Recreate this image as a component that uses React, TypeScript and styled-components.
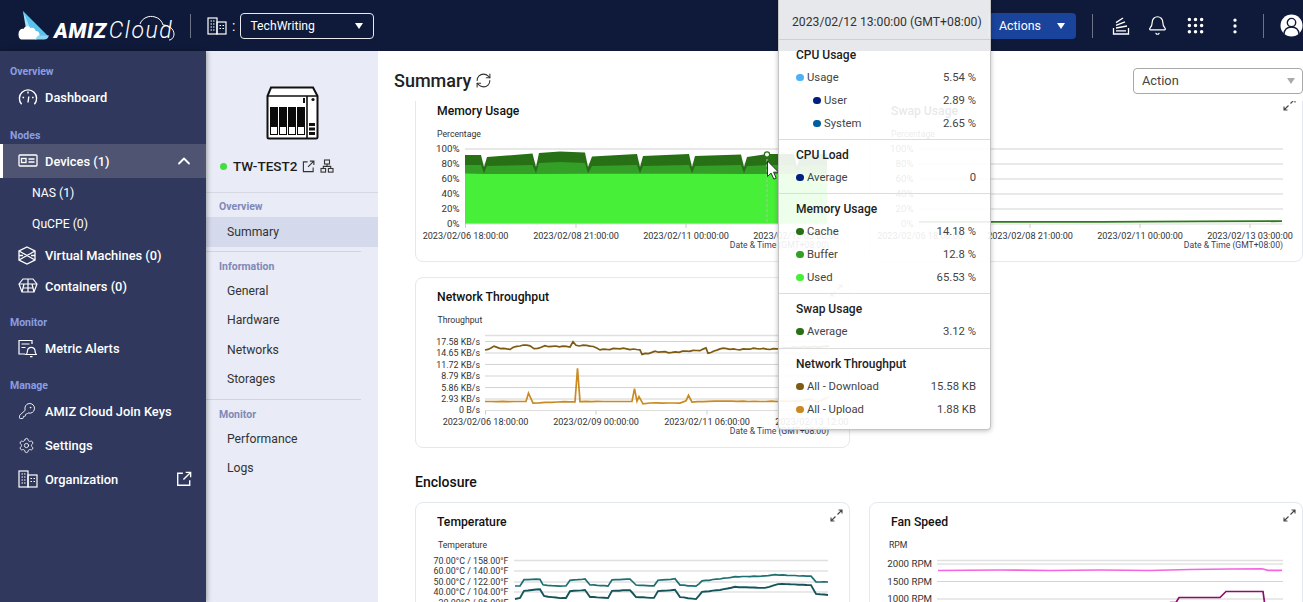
import { ReactNode } from 'react';
import styled, { createGlobalStyle } from 'styled-components';
import { Bell, ChevronUp, EllipsisVertical, Grip, KeyRound, RefreshCw, Settings } from 'lucide-react';

const GlobalStyle = createGlobalStyle`
  html, body { margin: 0; padding: 0; height: 100%; overflow: hidden; }
  body { font-family: Roboto, "Liberation Sans", sans-serif; color: #222; background: #fff; }
  * { box-sizing: border-box; }
  svg text { font-family: Roboto, "Liberation Sans", sans-serif; }
`;

// Icons
const OpenIcon = ({ size = 13, color = '#333' }: { size?: number; color?: string }) => (
  <svg width={size} height={size} viewBox="0 0 14 14" fill="none" stroke={color} strokeWidth="1.2">
    <path d="M6 2H1.5v10.5H12V8" />
    <path d="M6.5 7.5 12.5 1.5M8.5 1.2h4.3v4.3" />
  </svg>
);

const TopologyIcon = () => (
  <svg width="14" height="14" viewBox="0 0 14 14" fill="none" stroke="#333" strokeWidth="1.1">
    <rect x="4.5" y="1" width="5" height="4" />
    <rect x="1" y="9.5" width="4.6" height="3.6" />
    <rect x="8.4" y="9.5" width="4.6" height="3.6" />
    <path d="M7 5v2.4M3.3 9.5V7.4h7.4v2.1" />
  </svg>
);

const BuildingIcon = ({ size = 20 }: { size?: number }) => (
  <svg width={size} height={size} viewBox="0 0 20 20" fill="none" stroke="#fff" strokeWidth="1.2">
    <rect x="1" y="2" width="9" height="16" />
    <rect x="10" y="6" width="9" height="12" />
    <path d="M3.5 5h1.5M6 5h1.5M3.5 8h1.5M6 8h1.5M3.5 11h1.5M6 11h1.5M3.5 14h1.5M6 14h1.5M12.5 9.5h1.5M15.5 9.5h1.5M12.5 12.5h1.5M15.5 12.5h1.5" />
  </svg>
);

const GaugeIcon = () => (
  <svg width="20" height="18" viewBox="0 0 20 18" fill="none" stroke="#fff" strokeWidth="1.4">
    <path d="M3.6 16.2a8.6 8.6 0 1 1 12.8 0" />
    <path d="M10 3.5v2M4.5 9.5h1.6M14 9.5h1.6M10 14.5l.8-6" />
  </svg>
);

const DeviceIcon = () => (
  <svg width="20" height="14" viewBox="0 0 20 14" fill="none" stroke="#fff" strokeWidth="1.3">
    <rect x="1" y="1" width="18" height="11" rx="1" />
    <rect x="3.5" y="4.5" width="4.5" height="4" />
    <path d="M10.5 5h6M10.5 8h6" />
  </svg>
);

const VmIcon = () => (
  <svg width="18" height="19" viewBox="0 0 18 19" fill="none" stroke="#fff" strokeWidth="1.3">
    <path d="M9 1 17 5v9l-8 4-8-4V5z" />
    <path d="M1 5l16 9M17 5 1 14M1 9.5h4M13 9.5h4" />
  </svg>
);

const ContainerIcon = () => (
  <svg width="20" height="17" viewBox="0 0 20 17" fill="none" stroke="#fff" strokeWidth="1.2">
    <path d="M5 1h10l4 5-3 8H4L1 6z" />
    <path d="M1 6h18M6 6l-2 8M14 6l2 8M10 1v13M5 10h10" />
  </svg>
);

const AlertIcon = () => (
  <svg width="19" height="19" viewBox="0 0 19 19" fill="none" stroke="#fff" strokeWidth="1.2">
    <path d="M14 5V1.5H1V15h6" />
    <path d="M3.5 5h8M3.5 8.5h4" />
    <path d="M8 15.5c1.5-1 1.5-2.5 1.5-4a3.8 3.8 0 0 1 7.5 0c0 1.5 0 3 1.5 4zM12 17.6h2.5" />
  </svg>
);

const TasksIcon = () => (
  <svg width="18" height="18" viewBox="0 0 18 18" fill="none" stroke="#fff" strokeWidth="1.3">
    <path d="M1.5 11v6h15v-6M4 13.8h10M4 11l11-2M4 8.4l9-3.6M4 5.6l7-4.6" />
  </svg>
);

const Avatar = () => (
  <svg width="23" height="23" viewBox="0 0 23 23">
    <circle cx="11.5" cy="11.5" r="11" fill="#fff" />
    <circle cx="11.5" cy="8.6" r="4.2" fill="none" stroke="#0f1a3a" strokeWidth="1.4" />
    <path d="M4 20c.5-5 4-7 7.5-7s7 2 7.5 7" fill="none" stroke="#0f1a3a" strokeWidth="1.4" />
  </svg>
);

const ExpandIcon = ({ color = '#444' }: { color?: string }) => (
  <svg width="13" height="13" viewBox="0 0 13 13" fill="none" stroke={color} strokeWidth="1.1">
    <path d="M7.5 5.5 12 1M8.5 1H12v3.5M5.5 7.5 1 12M1 8.5V12h3.5" />
  </svg>
);

const NasIcon = () => (
  <svg width="54" height="54" viewBox="0 0 54 54">
    <path d="M6 1.5h42l4.5 8.5v41a1.5 1.5 0 0 1-1.5 1.5H4a1.5 1.5 0 0 1-1.5-1.5V10z" fill="#fff" stroke="#111" strokeWidth="2" />
    <path d="M2.5 10h50M42 10v42.5" stroke="#111" strokeWidth="1.6" />
    {[5, 14, 23, 32].map((x) => (
      <g key={x}>
        <rect x={x} y="21" width="8" height="28" fill="#0a0a0a" />
        <rect x={x + 1} y="41" width="6" height="7" fill="#fff" />
      </g>
    ))}
    <rect x="38" y="12" width="2" height="5" fill="#111" />
    <circle cx="48" cy="13.5" r="1.6" fill="#111" />
    <rect x="44" y="37" width="6" height="3" fill="#111" />
    <rect x="44" y="41.5" width="6" height="3" fill="#111" />
    <rect x="44" y="46" width="6" height="3" fill="#111" />
  </svg>
);

const LogoMark = () => (
  <svg width="32" height="31" viewBox="0 0 32 31">
    <path d="M5 1 30 26H12z" fill="#58c3ee" />
    <path d="M5 1 15 25H9z" fill="#a5e4f8" />
    <path d="M0.5 24c0-4 3-6 5-5 1-3 5-4 7-1 3-1 5 1 5 3 3 0 4 2 4 4s-2 4.5-4 4.5H4.500c-3 0-4-2-4-5.500z" fill="#fff" />
    <path d="M17 29.500h9c2 0 4-1 5-4H20z" fill="#8fd6f3" />
  </svg>
);

const CloudOutline = () => (
  <CloudOverlay width="40" height="27" viewBox="0 0 40 27" fill="none" stroke="#fff" strokeWidth="1">
    <path d="M4 10c2-6 9-9 15-7 4 1 7 4 8 8 6 0 11 4 11 9 0 3-2 6-5 6" />
  </CloudOverlay>
);

// Chart helpers
type P = [number, number];
const line = (pts: P[]) => pts.map(([x, y]) => `${x},${y}`).join(' ');

// little repeatable wobble so the traces look like measured data
const wobble = (knots: P[], amp: number, step = 3.4): P[] => {
  const out: P[] = [];
  for (let i = 0; i < knots.length - 1; i++) {
    const [x0, y0] = knots[i];
    const [x1, y1] = knots[i + 1];
    const n = Math.max(1, Math.round((x1 - x0) / step));
    for (let j = 0; j < n; j++) {
      const x = x0 + ((x1 - x0) * j) / n;
      const noise = (Math.sin(x * 1.7) + Math.sin(x * 0.63 + 1)) * amp * 0.5;
      out.push([+x.toFixed(1), +(y0 + ((y1 - y0) * j) / n + noise).toFixed(1)]);
    }
  }
  out.push(knots[knots.length - 1]);
  return out;
};

// x, top of stack, top of buffer
const memory: [number, number, number][] = [
  [465, 154, 164], [481, 154, 164], [484, 166, 172.5], [487, 156, 165], [532.5, 152.5, 164],
  [536, 166, 172.5], [539, 152, 162], [560, 150.5, 161], [585, 151.5, 162], [588, 166, 172.5],
  [592, 155.5, 165], [637, 153, 164], [640, 166, 172.5], [643, 155, 165], [689, 153, 164],
  [692, 166, 172.5], [695, 155, 165], [741, 153.5, 164], [744, 166, 172.5], [747, 156, 165],
  [767, 153, 164], [794, 153, 164], [797, 166, 172.5], [800, 155, 165], [827, 153, 164],
];

const areaOf = (idx: 1 | 2) =>
  `465,223 ${memory.map((m) => `${m[0]},${m[idx]}`).join(' ')} 827,223`;

const download = wobble(
  [[485, 349], [494, 346], [510, 348], [520, 345], [530, 344], [534, 348], [545, 345], [570, 345], [573, 341], [576, 345], [590, 345], [600, 348], [640, 348], [642, 354], [655, 350], [672, 352], [700, 349], [706, 347], [708, 352], [720, 348], [760, 348], [790, 347], [829, 345]],
  1
);

const upload = wobble(
  [[485, 400.5], [526, 400.5], [528.5, 392], [533, 402], [570, 400.5], [575, 401], [577.5, 367], [580, 400.5], [632, 400.5], [634.5, 388], [637, 400], [639, 395.5], [643, 403], [650, 402], [680, 402], [686, 400], [688.5, 394], [692, 401], [720, 400], [760, 400.5], [800, 400], [810, 398], [818, 401], [829, 396]],
  0.3,
  6
);

const tempTop = wobble(
  [[515, 585], [520, 585], [524, 579], [540, 578], [543, 584], [560, 585], [566, 585], [570, 579], [585, 578], [590, 584], [608, 585], [612, 579], [630, 578], [636, 584], [654, 585], [658, 579], [675, 578], [680, 584], [696, 585], [702, 580], [720, 578], [735, 576], [765, 575], [775, 574], [811, 575], [816, 581], [828, 581]],
  0.35,
  4
);

const tempBottom = wobble(
  [[515, 598], [520, 597], [524, 590], [540, 588], [544, 595], [560, 597], [566, 597], [570, 590], [585, 589], [590, 596], [608, 597], [612, 590], [630, 589], [636, 596], [654, 597], [658, 590], [675, 589], [680, 596], [696, 598], [702, 591], [720, 589], [735, 586], [765, 587], [778, 583], [811, 584], [816, 593], [828, 594]],
  0.2,
  4
);

const gridColor = '#d4d4d4';

const YLabels = ({ x, rows, size = 9.7 }: { x: number; rows: [string, number][]; size?: number }) => (
  <>
    {rows.map(([t, y]) => (
      <text key={t} x={x} y={y + 3.4} fontSize={size} fill="#333" textAnchor="end">{t}</text>
    ))}
  </>
);

const GridLines = ({ from, to, ys }: { from: number; to: number; ys: number[] }) => (
  <>
    {ys.map((y, i) => (
      <line key={y} x1={from} x2={to} y1={y} y2={y} stroke={i === 0 ? '#e0e0e0' : gridColor} strokeWidth={i === 0 ? 1.7 : 1.2} />
    ))}
  </>
);

const XLabels = ({ axis, rows }: { axis: number; rows: [string, number][] }) => (
  <>
    <line x1={rows[0][1]} x2={rows[rows.length - 1][1] + 33} y1={axis} y2={axis} stroke="#ddd" />
    {rows.map(([t, x]) => (
      <g key={t}>
        <line x1={x} x2={x} y1={axis} y2={axis + 4} stroke="#ccc" />
        <text x={x} y={axis + 14.5} fontSize="9.1" fill="#333" textAnchor="middle">{t}</text>
      </g>
    ))}
  </>
);

const Unit = ({ x, y, children }: { x: number; y: number; children: ReactNode }) => (
  <text x={x} y={y} fontSize="8.7" fill="#333">{children}</text>
);

const AxisName = ({ x, y }: { x: number; y: number }) => (
  <text x={x} y={y} fontSize="8.6" fill="#3c3c5a" textAnchor="end">Date &amp; Time (GMT+08:00)</text>
);

const percentRows: [string, number][] = [
  ['100%', 148], ['80%', 163], ['60%', 178], ['40%', 193], ['20%', 208], ['0%', 223],
];

const MemoryChart = () => (
  <ChartSvg viewBox="416 120 433 140" height="140">
    <Unit x={437} y={136}>Percentage</Unit>
    <YLabels x={459.500} rows={percentRows} />
    <GridLines from={465} to={829} ys={[148, 163, 178, 193, 208]} />
    <polygon points={areaOf(1)} fill="#277016" />
    <polygon points={areaOf(2)} fill="#339f26" />
    <polygon points="465,223 465,172.5 484,173 536,173 588,172.7 640,172.7 692,172.7 744,173 797,173 827,173 827,223" fill="#48ef38" />
    <XLabels axis={223} rows={[['2023/02/06 18:00:00', 465.5], ['2023/02/08 21:00:00', 576], ['2023/02/11 00:00:00', 686], ['2023/02/13 03:00:00', 796]]} />
    <AxisName x={829} y={247} />
    <line x1={767} x2={767} y1={153} y2={223} stroke="#9ecf98" strokeDasharray="3 2" />
    <circle cx={767} cy={153.5} r={2.6} fill="#fff" stroke="#277016" strokeWidth="1.2" />
    <path d="M767.5 160v15.5l3.6-3.4 2.7 6 2.4-1-2.6-5.9h5z" fill="#fff" stroke="#222" strokeWidth="0.9" />
  </ChartSvg>
);

const SwapChart = () => (
  <ChartSvg viewBox="870 120 432 140" height="140">
    <Unit x={891} y={136}>Percentage</Unit>
    <YLabels x={913.500} rows={percentRows} />
    <GridLines from={919} to={1283} ys={[148, 163, 178, 193, 208]} />
    <polyline points="919,220.8 1100,220.8 1200,220.4 1282,220.2" fill="none" stroke="#2c7a1a" strokeWidth="1.8" />
    <XLabels axis={223} rows={[['2023/02/06 18:00:00', 920], ['2023/02/08 21:00:00', 1030], ['2023/02/11 00:00:00', 1140], ['2023/02/13 03:00:00', 1250]]} />
    <AxisName x={1283} y={247} />
  </ChartSvg>
);

const NetworkChart = () => (
  <ChartSvg viewBox="416 306 433 140" height="140">
    <Unit x={437.5} y={322}>Throughput</Unit>
    <YLabels x={480} size={8.9} rows={[['17.58 KB/s', 340.5], ['14.65 KB/s', 352], ['11.72 KB/s', 363.5], ['8.79 KB/s', 375], ['5.86 KB/s', 386.5], ['2.93 KB/s', 398], ['0 B/s', 409]]} />
    <GridLines from={485} to={829} ys={[334.5, 340.5, 352, 363.5, 375, 386.5, 398]} />
    <XLabels axis={409.5} rows={[['2023/02/06 18:00:00', 485.5], ['2023/02/09 00:00:00', 596], ['2023/02/11 06:00:00', 707], ['2023/02/13 12:00:00', 818]]} />
    <polyline points={line(download)} fill="none" stroke="#7f5a13" strokeWidth="1.7" />
    <polyline points={line(upload)} fill="none" stroke="#c98a22" strokeWidth="1.7" />
    <AxisName x={829} y={433} />
  </ChartSvg>
);

const TemperatureChart = () => (
  <ChartSvg viewBox="416 531 433 80" height="80">
    <Unit x={438} y={547}>Temperature</Unit>
    <YLabels x={508.5} size={8.9} rows={[['70.00°C / 158.00°F', 559.5], ['60.00°C / 140.00°F', 570], ['50.00°C / 122.00°F', 581], ['40.00°C / 104.00°F', 591], ['30.00°C / 86.00°F', 601.5]]} />
    <GridLines from={514} to={828} ys={[559.5, 570, 581, 591, 601.5]} />
    <polyline points={line(tempTop)} fill="none" stroke="#1d7070" strokeWidth="1.7" />
    <polyline points={line(tempBottom)} fill="none" stroke="#15555a" strokeWidth="1.9" />
  </ChartSvg>
);

const FanChart = () => (
  <ChartSvg viewBox="870 531 432 80" height="80">
    <Unit x={889} y={547}>RPM</Unit>
    <YLabels x={932} rows={[['2000 RPM', 563], ['1500 RPM', 580.5], ['1000 RPM', 598]]} />
    <GridLines from={937} to={1283} ys={[559.5, 563, 580.5, 598]} />
    <polyline points="938,569.5 1000,569 1050,569.5 1100,569 1150,569.5 1190,568.5 1230,568 1262,567.8 1268,569.3 1282,569.3" fill="none" stroke="#f564e3" strokeWidth="1.7" />
    <polyline points="1170,601.5 1176,601.5 1179,596.5 1220,596.5 1226,590.5 1263,590.5 1265,605" fill="none" stroke="#8b0f6a" strokeWidth="1.7" />
  </ChartSvg>
);

// Data
const tooltipGroups = [
  {
    title: 'CPU Usage',
    rows: [
      { label: 'Usage', value: '5.54 %', color: '#4db1f5' },
      { label: 'User', value: '2.89 %', color: '#001f80', sub: true },
      { label: 'System', value: '2.65 %', color: '#00609f', sub: true },
    ],
  },
  { title: 'CPU Load', rows: [{ label: 'Average', value: '0', color: '#001f80' }] },
  {
    title: 'Memory Usage',
    rows: [
      { label: 'Cache', value: '14.18 %', color: '#277016' },
      { label: 'Buffer', value: '12.8 %', color: '#339f26' },
      { label: 'Used', value: '65.53 %', color: '#48ef38' },
    ],
  },
  { title: 'Swap Usage', rows: [{ label: 'Average', value: '3.12 %', color: '#277016' }] },
  {
    title: 'Network Throughput',
    rows: [
      { label: 'All - Download', value: '15.58 KB', color: '#7f5a13' },
      { label: 'All - Upload', value: '1.88 KB', color: '#c98a22' },
    ],
  },
];

export default function App() {
  return (
    <Page>
      <GlobalStyle />
      <Header>
        <Logo>
          <LogoMark />
          <Amiz>AMIZ</Amiz>
          <CloudWord>
            Cloud
            <CloudOutline />
          </CloudWord>
        </Logo>
        <HeaderDivider />
        <OrgGroup>
          <BuildingIcon />
          <Colon>:</Colon>
          <OrgSelect>
            TechWriting
            <Caret $color="#fff" />
          </OrgSelect>
        </OrgGroup>
        <HeaderRight>
          <ActionsButton>
            Actions
            <Caret $color="#fff" />
          </ActionsButton>
          <HeaderDivider />
          <HeaderIcons>
            <TasksIcon />
            <Bell size={21} color="#fff" strokeWidth={1.4} />
            <Grip size={21} color="#fff" />
            <Kebab><EllipsisVertical size={20} color="#fff" /></Kebab>
          </HeaderIcons>
          <HeaderDivider />
          <Avatar />
        </HeaderRight>
      </Header>

      <Body>
        <Sidebar>
          <NavLabel>Overview</NavLabel>
          <NavItem><NavIcon><GaugeIcon /></NavIcon>Dashboard</NavItem>
          <NavLabel $top={11}>Nodes</NavLabel>
          <NavItem $active>
            <NavIcon><DeviceIcon /></NavIcon>
            Devices (1)
            <Chevron><ChevronUp size={20} color="#fff" strokeWidth={2.2} /></Chevron>
          </NavItem>
          <NavSub>NAS (1)</NavSub>
          <NavSub>QuCPE (0)</NavSub>
          <NavItem $short><NavIcon><VmIcon /></NavIcon>Virtual Machines (0)</NavItem>
          <NavItem $short><NavIcon><ContainerIcon /></NavIcon>Containers (0)</NavItem>
          <NavLabel $top={10}>Monitor</NavLabel>
          <NavItem><NavIcon><AlertIcon /></NavIcon>Metric Alerts</NavItem>
          <NavLabel $top={10}>Manage</NavLabel>
          <NavItem><NavIcon><KeyRound size={18} color="#fff" strokeWidth={1.2} /></NavIcon>AMIZ Cloud Join Keys</NavItem>
          <NavItem><NavIcon><Settings size={17} color="#fff" strokeWidth={1.2} /></NavIcon>Settings</NavItem>
          <NavItem>
            <NavIcon><BuildingIcon size={20} /></NavIcon>
            Organization
            <NavTrail><OpenIcon size={16} color="#fff" /></NavTrail>
          </NavItem>
        </Sidebar>

        <DevicePanel>
          <DeviceHero>
            <NasIcon />
            <DeviceName>
              <StatusDot />
              <strong>TW-TEST2</strong>
              <OpenIcon />
              <TopologyIcon />
            </DeviceName>
          </DeviceHero>
          <PanelLabel>Overview</PanelLabel>
          <PanelItem $active>Summary</PanelItem>
          <PanelDivider />
          <PanelLabel>Information</PanelLabel>
          <PanelItem>General</PanelItem>
          <PanelItem>Hardware</PanelItem>
          <PanelItem>Networks</PanelItem>
          <PanelItem>Storages</PanelItem>
          <PanelDivider />
          <PanelLabel>Monitor</PanelLabel>
          <PanelItem>Performance</PanelItem>
          <PanelItem>Logs</PanelItem>
        </DevicePanel>

        <Main>
          <MainHead>
            <MainTitle>Summary</MainTitle>
            <RefreshCw size={17} color="#333" strokeWidth={1.5} />
            <ActionSelect>
              Action
              <Caret $color="#aaa" />
            </ActionSelect>
          </MainHead>
          <Scroller>
            <CardGrid>
              <Card $height={171}>
                <CardTitle>Memory Usage</CardTitle>
                <MemoryChart />
              </Card>
              <Card $height={171}>
                <CardTitle>Swap Usage</CardTitle>
                <ExpandSlot><ExpandIcon /></ExpandSlot>
                <SwapChart />
              </Card>
              <Card $height={171}>
                <CardTitle>Network Throughput</CardTitle>
                <ExpandSlot><ExpandIcon color="#888" /></ExpandSlot>
                <NetworkChart />
              </Card>
              <div />
            </CardGrid>
            <SectionTitle>Enclosure</SectionTitle>
            <CardGrid>
              <Card $height={200}>
                <CardTitle>Temperature</CardTitle>
                <ExpandSlot><ExpandIcon /></ExpandSlot>
                <TemperatureChart />
              </Card>
              <Card $height={200}>
                <CardTitle>Fan Speed</CardTitle>
                <ExpandSlot><ExpandIcon /></ExpandSlot>
                <FanChart />
              </Card>
            </CardGrid>
          </Scroller>
        </Main>
      </Body>

      <Tooltip>
        <TooltipHead>2023/02/12 13:00:00 (GMT+08:00)</TooltipHead>
        {tooltipGroups.map((g) => (
          <TooltipGroup key={g.title}>
            <TooltipTitle>{g.title}</TooltipTitle>
            {g.rows.map((r) => (
              <TooltipRow key={r.label} $sub={r.sub}>
                <Dot $color={r.color} />
                {r.label}
                <TooltipValue>{r.value}</TooltipValue>
              </TooltipRow>
            ))}
          </TooltipGroup>
        ))}
      </Tooltip>
    </Page>
  );
}

// Styles
const Page = styled.div`
  position: relative;
  width: 1303px;
  height: 602px;
  overflow: hidden;
  display: flex;
  flex-direction: column;
`;

const Header = styled.header`
  height: 51px;
  flex: none;
  display: flex;
  align-items: center;
  padding-left: 18px;
  background: #0f1a3a;
  color: #fff;
`;

const Logo = styled.div`
  display: flex;
  align-items: flex-end;
  width: 172px;
  height: 30px;
`;

const Amiz = styled.span`
  font-size: 21px;
  font-weight: 900;
  font-style: italic;
  line-height: 20px;
  margin-left: 4px;
  letter-spacing: 0.6px;
`;

const CloudWord = styled.span`
  position: relative;
  font-size: 23px;
  font-weight: 300;
  font-style: italic;
  line-height: 20px;
  margin-left: 2px;
  letter-spacing: 1.6px;
`;

const CloudOverlay = styled.svg`
  position: absolute;
  right: -3px;
  bottom: 0;
`;

const HeaderDivider = styled.span`
  width: 1px;
  height: 24px;
  background: #6c7386;
`;

const OrgGroup = styled.div`
  display: flex;
  align-items: center;
  margin-left: 16px;
`;

const Colon = styled.span`
  margin: 0 5px 0 5px;
  font-size: 14px;
`;

const OrgSelect = styled.div`
  width: 134px;
  height: 26px;
  display: flex;
  align-items: center;
  justify-content: space-between;
  padding: 0 10px 0 9px;
  border: 1px solid #e8e8ee;
  border-radius: 4px;
  font-size: 12.2px;
`;

const Caret = styled.i<{ $color: string }>`
  width: 0;
  height: 0;
  border-left: 4px solid transparent;
  border-right: 4px solid transparent;
  border-top: 6px solid ${(p) => p.$color};
`;

const HeaderRight = styled.div`
  margin-left: auto;
  display: flex;
  align-items: center;
  gap: 16px;
`;

const ActionsButton = styled.div`
  width: 88px;
  height: 26px;
  display: flex;
  align-items: center;
  justify-content: space-between;
  padding: 0 11px;
  border-radius: 4px;
  background: #1a439c;
  font-size: 12.4px;
`;

const HeaderIcons = styled.div`
  display: flex;
  align-items: center;
  gap: 17px;
  padding: 0 2px 0 3px;
`;

const Kebab = styled.span`
  display: flex;
  margin-left: 2px;
`;

const Body = styled.div`
  flex: 1;
  min-height: 0;
  display: flex;
`;

const Sidebar = styled.nav`
  width: 206px;
  flex: none;
  padding-top: 10px;
  background: #30395d;
  color: #fff;
  box-shadow: 2px 0 4px rgba(0, 0, 0, 0.25);
  z-index: 1;
`;

const NavLabel = styled.div<{ $top?: number }>`
  height: 19px;
  line-height: 21px;
  margin-top: ${(p) => p.$top ?? 0}px;
  padding-left: 10px;
  font-size: 10.5px;
  font-weight: 700;
  color: #8b9de2;
`;

const NavItem = styled.div<{ $active?: boolean; $short?: boolean }>`
  height: ${(p) => (p.$short ? 31 : 34)}px;
  display: flex;
  align-items: center;
  padding-right: 14px;
  font-size: 12.85px;
  font-weight: 500;
  background: ${(p) => (p.$active ? '#4f5472' : 'transparent')};
  border-left: 3px solid ${(p) => (p.$active ? '#fff' : 'transparent')};
`;

const NavIcon = styled.span`
  width: 42px;
  padding-left: 15px;
  display: flex;
  align-items: center;
`;

const NavTrail = styled.span`
  margin-left: auto;
  display: flex;
`;

const Chevron = styled(NavTrail)`
  margin-right: -2px;
`;

const NavSub = styled.div`
  height: 31px;
  line-height: 31px;
  padding-left: 32px;
  font-size: 12.2px;
`;

const DevicePanel = styled.aside`
  width: 172px;
  flex: none;
  background: #e9ecf6;
`;

const DeviceHero = styled.div`
  height: 142px;
  padding-top: 35px;
  display: flex;
  flex-direction: column;
  align-items: center;
  border-bottom: 1px solid #d6d8e2;
`;

const DeviceName = styled.div`
  width: 100%;
  margin-top: 18px;
  padding-left: 14px;
  display: flex;
  align-items: center;
  gap: 5px;
  font-size: 13.5px;
  color: #1b1b1b;

  strong {
    font-weight: 500;
  }
`;

const StatusDot = styled.span`
  width: 7px;
  height: 7px;
  border-radius: 50%;
  background: #3fe03c;
  margin-right: 1px;
`;

const PanelLabel = styled.div`
  height: 24px;
  padding: 7px 0 0 13px;
  font-size: 10.5px;
  font-weight: 700;
  color: #8088b8;
`;

const PanelItem = styled.div<{ $active?: boolean }>`
  height: ${(p) => (p.$active ? 30 : 29.4)}px;
  line-height: ${(p) => (p.$active ? 30 : 28)}px;
  padding-left: 21px;
  font-size: 12.2px;
  color: #333;
  background: ${(p) => (p.$active ? '#d5d9ec' : 'transparent')};
`;

const PanelDivider = styled.div`
  width: 155px;
  height: 1px;
  margin: 4px 0 1px;
  background: #d2d4de;
`;

const Main = styled.main`
  flex: 1;
  min-width: 0;
  display: flex;
  flex-direction: column;
`;

const MainHead = styled.div`
  height: 50px;
  flex: none;
  display: flex;
  align-items: center;
  gap: 4px;
  padding: 9px 0 0 16px;
`;

const MainTitle = styled.h1`
  margin: 0;
  font-size: 18px;
  font-weight: 500;
  color: #222;
`;

const ActionSelect = styled.div`
  margin-left: auto;
  width: 170px;
  height: 26px;
  display: flex;
  align-items: center;
  justify-content: space-between;
  padding: 0 7px 0 8px;
  border: 1px solid #a8a8a8;
  border-radius: 4px;
  font-size: 12.8px;
  color: #444;
`;

const Scroller = styled.div`
  flex: 1;
  min-height: 0;
  overflow: hidden;
  padding-left: 37px;
`;

const CardGrid = styled.div`
  display: grid;
  grid-template-columns: 435px 434px;
  gap: 15px 19px;

  &:first-child {
    margin-top: -10px;
  }
`;

const Card = styled.section<{ $height: number }>`
  position: relative;
  height: ${(p) => p.$height}px;
  padding-top: 10px;
  border: 1px solid #e3e8f0;
  border-radius: 8px;
  background: #fff;
`;

const CardTitle = styled.h3`
  margin: 0;
  height: 19px;
  line-height: 19px;
  padding-left: 21px;
  font-size: 12.2px;
  font-weight: 500;
  color: #111;
`;

const ExpandSlot = styled.span`
  position: absolute;
  top: 6px;
  right: 6px;
  display: flex;
`;

const ChartSvg = styled.svg`
  display: block;
  width: 100%;
`;

const SectionTitle = styled.h2`
  margin: 24px 0 10px;
  height: 20px;
  line-height: 20px;
  font-size: 14px;
  font-weight: 500;
  color: #111;
`;

const Tooltip = styled.div`
  position: absolute;
  left: 778px;
  top: 0;
  width: 213px;
  height: 430px;
  z-index: 5;
  border: 1px solid #c4c4c4;
  border-top: none;
  border-radius: 0 0 4px 4px;
  background: rgba(255, 255, 255, 0.9);
  box-shadow: 0 1px 5px rgba(0, 0, 0, 0.25);
  font-size: 11.3px;
`;

const TooltipHead = styled.div`
  height: 40px;
  line-height: 44px;
  padding-left: 13px;
  border-bottom: 1px solid #cfcfcf;
  font-size: 12.2px;
  color: #333;
  white-space: nowrap;
`;

const TooltipGroup = styled.div`
  padding: 4px 14px 4px 17px;
  border-top: 1px solid #dcdcdc;

  ${TooltipHead} + & {
    border-top: none;
  }

  &:nth-of-type(5) {
    padding-bottom: 5px;
  }
`;

const TooltipTitle = styled.div`
  height: 22px;
  line-height: 22px;
  font-size: 12px;
  font-weight: 500;
  color: #222;
`;

const TooltipRow = styled.div<{ $sub?: boolean }>`
  height: 23px;
  display: flex;
  align-items: center;
  padding-left: ${(p) => (p.$sub ? 17 : 0)}px;
  color: #444;
`;

const Dot = styled.span<{ $color: string }>`
  width: 7.5px;
  height: 7.5px;
  margin-right: 3.5px;
  border-radius: 50%;
  background: ${(p) => p.$color};
`;

const TooltipValue = styled.span`
  margin-left: auto;
`;
